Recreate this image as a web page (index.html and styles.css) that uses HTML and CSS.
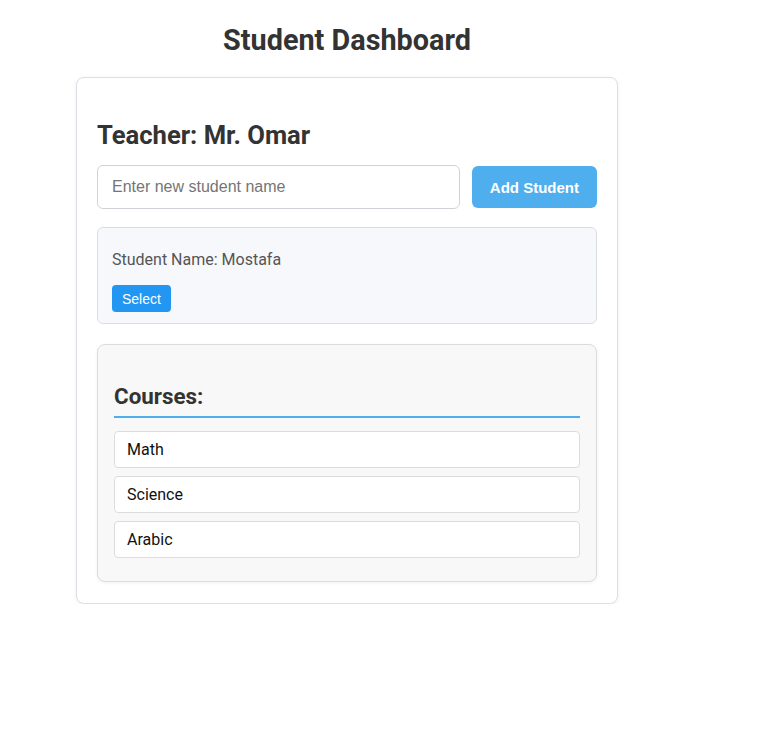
FILE: index.html
```html
<!DOCTYPE html>
<html>
<head>
<meta charset="utf-8">
<link rel="stylesheet" href="styles.css">
</head>
<body>
<div class="page">
  <h1 class="title">Student Dashboard</h1>
  <div class="card">
    <h2 class="teacher">Teacher: Mr. Omar</h2>
    <div class="add-row">
      <input class="name-input" type="text" placeholder="Enter new student name">
      <button class="add-btn">Add Student</button>
    </div>
    <div class="student">
      <p class="student-name">Student Name: Mostafa</p>
      <button class="select-btn">Select</button>
    </div>
    <div class="courses">
      <h3 class="courses-title">Courses:</h3>
      <ul class="course-list">
        <li class="course">Math</li>
        <li class="course">Science</li>
        <li class="course">Arabic</li>
      </ul>
    </div>
  </div>
</div>
</body>
</html>
```
FILE: styles.css
```css
* { box-sizing: border-box; }
html, body { margin: 0; padding: 0; background: #fff; }
body { font-family: Roboto, "Liberation Sans", sans-serif; color: #333; }
.page { width: 542px; margin-left: 76px; padding-top: 23px; }
.title {
  margin: 0 0 20px;
  text-align: center;
  font-size: 28.8px;
  font-weight: 700;
  line-height: 34px;
  color: #333;
}
.card {
  border: 1px solid #dcdfe3;
  border-radius: 8px;
  padding: 20px 20px 21px;
  box-shadow: 0 1px 4px rgba(0,0,0,0.06);
  background: #fff;
}
.teacher {
  margin: 22px 0 15px;
  font-size: 25.6px;
  font-weight: 700;
  line-height: 30px;
  color: #333;
}
.add-row { display: flex; gap: 12px; align-items: center; }
.name-input {
  flex: 1;
  height: 44px;
  border: 1px solid #cfd3d8;
  border-radius: 6px;
  padding: 0 14px;
  font-family: "Liberation Sans", Arial, sans-serif;
  font-size: 16px;
  color: #333;
  outline: none;
}
.name-input::placeholder { color: #757575; }
.add-btn {
  height: 42px;
  padding: 0 18px;
  border: none;
  border-radius: 6px;
  background: #4faeee;
  color: #fff;
  font-family: "Liberation Sans", Arial, sans-serif;
  font-size: 15px;
  font-weight: 700;
}
.student {
  margin-top: 18px;
  border: 1px solid #dcdde0;
  border-radius: 6px;
  background: #f7f8fc;
  padding: 10px 14px 11px;
}
.student-name {
  margin: 12px 0 16px;
  font-size: 16px;
  line-height: 19px;
  color: #555;
}
.select-btn {
  display: block;
  height: 27px;
  padding: 0 10px;
  border: none;
  border-radius: 4px;
  background: #2196f3;
  color: #fff;
  font-family: "Liberation Sans", Arial, sans-serif;
  font-size: 14px;
}
.courses {
  margin-top: 20px;
  border: 1px solid #dcdcdc;
  border-radius: 8px;
  background: #f8f8f8;
  padding: 16px 16px 15px;
  box-shadow: 0 1px 4px rgba(0,0,0,0.06);
}
.courses-title {
  margin: 22px 0 13px;
  padding-bottom: 7px;
  border-bottom: 2px solid #4faeee;
  font-size: 22.4px;
  font-weight: 700;
  line-height: 26px;
  color: #333;
}
.course-list { list-style: none; margin: 0; padding: 0; }
.course {
  height: 37px;
  margin-bottom: 8px;
  padding: 0 12px;
  border: 1px solid #dcdcdc;
  border-radius: 4px;
  background: #fff;
  font-size: 16px;
  line-height: 35px;
  color: #111;
}
```
